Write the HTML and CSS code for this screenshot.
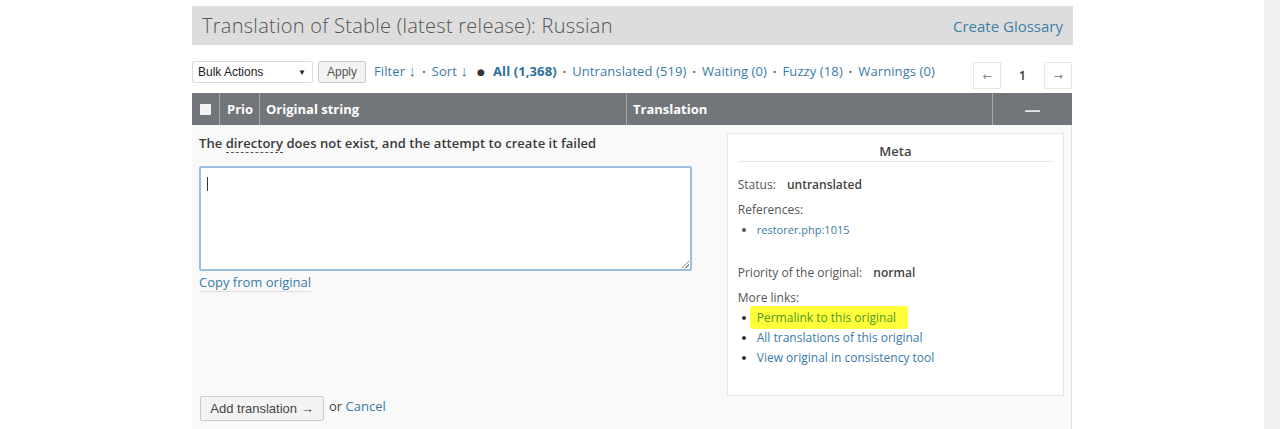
FILE: index.html
```html
<!DOCTYPE html>
<html>
<head>
<meta charset="utf-8">
<link rel="stylesheet" href="styles.css">
</head>
<body>
<div class="viewport">
  <div class="page">
    <div class="title-bar">
      <h1 class="title">Translation of Stable (latest release): Russian</h1>
      <a class="glossary" href="#">Create Glossary</a>
    </div>

    <div class="toolbar">
      <div class="bulk">
        <div class="select"><span>Bulk Actions</span><span class="caret">▼</span></div>
        <div class="apply">Apply</div>
      </div>
      <div class="filters">
        <a href="#">Filter <span class="arr">↓</span></a><span class="sep">•</span>
        <a href="#">Sort <span class="arr">↓</span></a>
        <span class="dot">●</span>
        <a href="#" class="current">All (1,368)</a><span class="sep">•</span>
        <a href="#">Untranslated (519)</a><span class="sep">•</span>
        <a href="#">Waiting (0)</a><span class="sep">•</span>
        <a href="#">Fuzzy (18)</a><span class="sep">•</span>
        <a href="#">Warnings (0)</a>
      </div>
      <div class="paging">
        <span class="pbox">←</span>
        <span class="pnum">1</span>
        <span class="pbox">→</span>
      </div>
    </div>

    <div class="thead">
      <div class="th th-check"><span class="cb"></span></div>
      <div class="th th-prio">Prio</div>
      <div class="th th-orig">Original string</div>
      <div class="th th-trans">Translation</div>
      <div class="th th-act">—</div>
    </div>

    <div class="editor">
      <div class="edit-left">
        <div class="original">The <span class="glossary-word">directory</span> does not exist, and the attempt to create it failed</div>
        <div class="textarea"><span class="cursor"></span><span class="grip"></span></div>
        <a class="copy" href="#">Copy from original</a>
        <div class="actions">
          <span class="add-btn">Add translation →</span>
          <span class="or">or <a href="#">Cancel</a></span>
        </div>
      </div>
      <div class="meta">
        <div class="meta-title">Meta</div>
        <div class="meta-line">Status: <b>untranslated</b></div>
        <div class="meta-line">References:</div>
        <ul class="refs"><li><a href="#">restorer.php:1015</a></li></ul>
        <div class="meta-line prio">Priority of the original: <b>normal</b></div>
        <div class="meta-line">More links:</div>
        <ul class="links">
          <li><a href="#" class="hl">Permalink to this original</a></li>
          <li><a href="#">All translations of this original</a></li>
          <li><a href="#">View original in consistency tool</a></li>
        </ul>
      </div>
    </div>
  </div>
  <div class="scrollbar"></div>
</div>
</body>
</html>
```

FILE: styles.css
```css
* { box-sizing: border-box; }
html, body { margin: 0; padding: 0; background: #fff; }
body { font-family: "Open Sans", "DejaVu Sans", sans-serif; color: #333; }
a { color: #3a7aa8; text-decoration: none; }

.viewport { display: flex; width: 1280px; height: 429px; overflow: hidden; }
.page { width: 881px; margin-left: 192px; padding-top: 6px; }
.scrollbar { margin-left: auto; width: 16px; height: 429px; background: #f0f0f0; }

.title-bar {
  height: 39px; background: #dddddd;
  display: flex; align-items: center; justify-content: space-between;
  padding: 0 10px 0 10px;
}
.title { margin: 0; font-size: 20px; font-weight: 300; color: #555; letter-spacing: 0.27px; }
.glossary { font-size: 15px; color: #3f7fa8; }

.toolbar { display: flex; align-items: flex-start; margin-top: 16px; height: 27px; }
.bulk { display: flex; align-items: center; gap: 5px; font-family: "Liberation Sans", Arial, sans-serif; font-size: 12px; }
.select {
  width: 121px; height: 22px; border: 1px solid #ddd; border-radius: 2px; background: #fff;
  display: flex; align-items: center; justify-content: space-between; padding: 0 6px 0 5px; color: #222;
}
.caret { font-size: 8px; color: #222; }
.apply {
  width: 48px; height: 22px; border: 1px solid #ccc; border-radius: 2px; background: #f3f3f3;
  display: flex; align-items: center; justify-content: center; color: #555;
}
.filters { margin-left: 8px; font-size: 13px; display: flex; align-items: center; white-space: nowrap; height: 20px; letter-spacing: 0.1px; }
.filters a { color: #3a7aa8; }
.arr { font-family: "Liberation Sans", Arial, sans-serif; font-size: 15px; line-height: 1; }
.filters .current { font-weight: 700; color: #2d6f9e; }
.sep { font-size: 9px; color: #555; margin: 0 6px 0 6px; }
.dot { font-size: 9px; color: #333; margin: 0 8px 0 9px; }
.paging { margin-left: auto; display: flex; align-items: center; margin-right: 1px; margin-top: 1px; }
.pbox {
  width: 28px; height: 27px; border: 1px solid #e6e6e6; display: flex; align-items: center; justify-content: center;
  font-size: 11px; color: #888; background: #fff;
}
.pnum { width: 43px; text-align: center; font-size: 12px; font-weight: 600; color: #333; }

.thead {
  margin-top: 5px; height: 32px; background: #72767a; display: flex; color: #fff;
  font-size: 13px; font-weight: 700; width: 880px;
}
.th { display: flex; align-items: center; border-right: 1px solid #a4a7aa; padding-left: 6px; }
.th:last-child { border-right: none; }
.th-check { width: 28px; padding-left: 8px; }
.cb { width: 11px; height: 11px; background: #f4f4f4; border-radius: 1px; }
.th-prio { width: 40px; padding-left: 7px; }
.th-orig { width: 367px; }
.th-trans { width: 366px; }
.th-act { flex: 1; justify-content: center; padding-left: 0; font-size: 16px; font-weight: 700; color: #e6e6e6; }

.editor {
  width: 880px; height: 304px; background: #f9f9f9; border-right: 1px solid #e2e2e2;
  display: flex; padding: 9px 7px 0 7px;
}
.edit-left { width: 528px; display: flex; flex-direction: column; align-items: flex-start; }
.original { font-size: 13px; font-weight: 600; color: #3a3a3a; line-height: 18px; letter-spacing: 0.05px; }
.glossary-word { border-bottom: 1px dashed #555; }
.textarea {
  margin-top: 14px; width: 493px; height: 105px; background: #fff; border: 2px solid #9bbde0;
  border-radius: 2px; position: relative;
}
.cursor { position: absolute; left: 6px; top: 9px; width: 1px; height: 14px; background: #333; }
.grip {
  position: absolute; right: 1px; bottom: 1px; width: 7px; height: 7px;
  background: linear-gradient(135deg, transparent 45%, #888 46%, #888 54%, transparent 55%, transparent 70%, #888 71%, #888 79%, transparent 80%);
}
.copy { margin-top: 2px; font-size: 13px; color: #3a7aa8; border-bottom: 1px solid #ddd; line-height: 18px; }
.actions { margin-top: auto; margin-bottom: 8px; display: flex; align-items: center; gap: 5px; }
.add-btn {
  margin-left: 1px; height: 25px; width: 124px; border: 1px solid #ccc; border-radius: 2px; background: #f3f3f3;
  display: flex; align-items: center; justify-content: center;
  font-family: "Liberation Sans", Arial, sans-serif; font-size: 13px; color: #444;
}
.or { font-size: 13px; color: #444; margin-top: -5px; }

.meta {
  width: 338px; height: 263px; background: #fff; border: 1px solid #e8e8e8; margin-left: 1px; margin-top: -1px;
  padding: 8px 10px 0 10px; font-size: 12px; color: #555;
}
.meta-title {
  text-align: center; font-size: 13px; font-weight: 600; color: #444;
  padding-bottom: 0; border-bottom: 1px solid #e6e6e6; line-height: 19px;
}
.meta-line { line-height: 18px; margin-top: 14px; }
.meta-line + .meta-line { margin-top: 7px; }
.meta-line b { font-weight: 600; color: #444; margin-left: 8px; }
.meta-title + .meta-line { margin-top: 14px; }
.meta-line.prio { margin-top: 25px; }
.refs, .links { margin: 0; padding: 0 0 0 19px; list-style: disc; }
.refs { margin-top: 2px; font-size: 11px; }
.refs li { line-height: 18px; }
.links li { line-height: 20px; font-size: 12px; color: #333; }
.links { margin-top: 1px; }
.hl { background: #ffff3a; color: #4f9a2a; padding: 3px 12px 3px 7px; margin-left: -7px; border-radius: 2px; }
```
